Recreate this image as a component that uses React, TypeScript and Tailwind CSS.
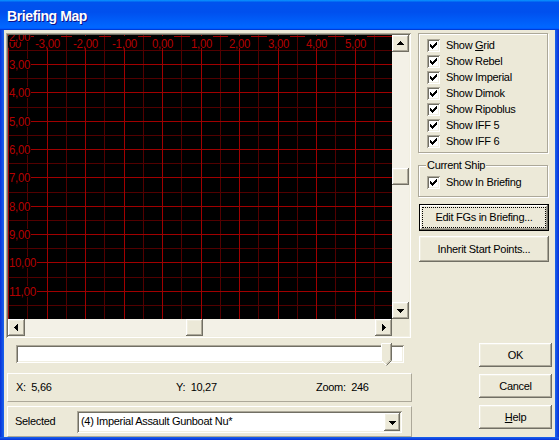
import React from 'react'

// classic 3D bevels (XP colour scheme)
const raised =
  'shadow-[inset_-1px_-1px_#716f64,inset_1px_1px_#ffffff,inset_-2px_-2px_#aca899,inset_2px_2px_#f1efe2]'
const sunken =
  'shadow-[inset_1px_1px_#aca899,inset_-1px_-1px_#ffffff,inset_2px_2px_#716f64,inset_-2px_-2px_#f1efe2]'

const MINOR = '#520000'
const MAJOR = '#a00000'
const LABEL = '#b40000'

function Btn3D({ className = '', children }: { className?: string; children?: React.ReactNode }) {
  return (
    <div className={`bg-[#ece9d8] ${raised} flex items-center justify-center shrink-0 ${className}`}>
      {children}
    </div>
  )
}

function Arrow({ dir, w = 17, h = 17 }: { dir: 'up' | 'down' | 'left' | 'right'; w?: number; h?: number }) {
  const cx = Math.floor(w / 2)
  const cy = Math.floor(h / 2)
  const rects: number[][] = []
  for (let k = 0; k < 4; k++) {
    if (dir === 'up') rects.push([cx - k, cy - 2 + k, 2 * k + 1, 1])
    if (dir === 'down') rects.push([cx - 3 + k, cy - 1 + k, 7 - 2 * k, 1])
    if (dir === 'left') rects.push([cx - 2 + k, cy - k, 1, 2 * k + 1])
    if (dir === 'right') rects.push([cx - 1 + k, cy - 3 + k, 1, 7 - 2 * k])
  }
  return (
    <svg width={w} height={h} className="block" shapeRendering="crispEdges">
      {rects.map(([x, y, rw, rh], i) => (
        <rect key={i} x={x} y={y} width={rw} height={rh} fill="#000" />
      ))}
    </svg>
  )
}

function Check({ children }: { children: React.ReactNode }) {
  const cols = [
    [3, 5],
    [4, 6],
    [5, 7],
    [6, 6],
    [7, 5],
    [8, 4],
    [9, 3],
  ]
  return (
    <div className="flex items-center h-[16px] gap-[6px]">
      <div className={`w-[13px] h-[13px] bg-white shrink-0 ${sunken}`}>
        <svg width="13" height="13" className="block" shapeRendering="crispEdges">
          {cols.map(([x, y]) => (
            <rect key={x} x={x} y={y} width={1} height={3} fill="#000" />
          ))}
        </svg>
      </div>
      <span>{children}</span>
    </div>
  )
}

function labelWidth(s: string) {
  let w = 0
  for (const c of s) w += c === '-' ? 4 : c === ',' ? 3 : 6
  return w
}

function fmt(v: number) {
  return v.toFixed(2).replace('.', ',')
}

function Grid() {
  const W = 384
  const H = 284
  const xs = Array.from({ length: 21 }, (_, j) => ({ x: Math.round(19.25 * j), major: j % 2 === 0, j })).filter(
    (l) => l.x < W
  )
  const ys = Array.from({ length: 21 }, (_, i) => ({ y: Math.round(0.67 + 14.167 * i), major: i % 2 === 0, i })).filter(
    (l) => l.y < H
  )
  const font = { fontFamily: "'Liberation Sans', Arial, sans-serif", fontSize: 12 }

  return (
    <svg width={W} height={H} className="block bg-black" shapeRendering="crispEdges">
      {xs.filter((l) => !l.major).map((l) => (
        <line key={'vm' + l.j} x1={l.x + 0.5} y1={0} x2={l.x + 0.5} y2={H} stroke={MINOR} />
      ))}
      {ys.filter((l) => !l.major).map((l) => (
        <line key={'hm' + l.i} x1={0} y1={l.y + 0.5} x2={W} y2={l.y + 0.5} stroke={MINOR} />
      ))}
      {xs.filter((l) => l.major).map((l) => (
        <line key={'vM' + l.j} x1={l.x + 0.5} y1={0} x2={l.x + 0.5} y2={H} stroke={MAJOR} />
      ))}
      {ys.filter((l) => l.major).map((l) => (
        <line key={'hM' + l.i} x1={0} y1={l.y + 0.5} x2={W} y2={l.y + 0.5} stroke={MAJOR} />
      ))}

      {/* column labels */}
      {xs.filter((l) => l.major).map((l) => {
        const s = fmt(-4 + l.j / 2)
        const w = labelWidth(s)
        const x0 = l.x + 0.5 - w / 2
        return (
          <g key={'cl' + l.j}>
            <rect x={x0 - 1} y={1} width={w + 2} height={12} fill="#000" />
            <text x={x0} y={12.5} textLength={w} lengthAdjust="spacingAndGlyphs" fill={LABEL} style={font}>
              {s}
            </text>
          </g>
        )
      })}

      {/* row labels */}
      {ys.filter((l) => l.major).map((l) => {
        const s = fmt(2 + l.i / 2)
        const w = labelWidth(s)
        return (
          <g key={'rl' + l.i}>
            <rect x={1} y={l.y - 5} width={w + 1} height={11} fill="#000" />
            <text x={1} y={l.y + 5} textLength={w} lengthAdjust="spacingAndGlyphs" fill={LABEL} style={font}>
              {s}
            </text>
          </g>
        )
      })}
    </svg>
  )
}

function SliderThumb() {
  return (
    <svg width="11" height="23" viewBox="0 0 11 23" className="absolute left-[365px] -top-[2px] block">
      <polygon points="0,0 11,0 11,17 5.5,22.5 0,17" fill="#ece9d8" />
      <path d="M0.5 17.5 V0.5 H10" stroke="#fff" fill="none" />
      <path d="M0.5 17.5 L5.5 22.5" stroke="#fff" fill="none" />
      <path d="M10.5 0 V17.5 L5.5 22.5" stroke="#716f64" fill="none" />
      <path d="M9.5 1 V17 L5.5 21" stroke="#aca899" fill="none" />
    </svg>
  )
}

export default function App() {
  return (
    <div className="w-[559px] h-[440px] flex flex-col overflow-hidden select-none font-['Liberation_Sans',Arial,sans-serif] text-[11px] leading-[13px] tracking-[-0.3px] text-black">
      {/* title bar */}
      <div className="h-[30px] shrink-0 flex items-center pl-[7px] pt-[2px] bg-[linear-gradient(180deg,#0997ff,#0053ee_8%,#0050ee_40%,#0066ff_88%,#0066ff_93%,#005bff_95%,#003dd7_96%,#003dd7)]">
        <span className="text-white font-bold text-[14px] leading-[16px] tracking-[-0.4px] [text-shadow:1px_1px_#0f1089]">
          Briefing Map
        </span>
      </div>

      <div className="flex h-[407px] shrink-0">
        <div className="w-[4px] bg-[linear-gradient(to_right,#0831d9,#1a64ec)]" />

        <div className="w-[551px] bg-[#ece9d8] flex">
          {/* left column */}
          <div className="ml-[2px] mt-[3px] w-[405px] flex flex-col">
            {/* map */}
            <div className={`h-[305px] p-[2px] ${sunken} flex flex-col`}>
              <div className="flex h-[284px]">
                <Grid />
                <div className="w-[17px] h-[284px] flex flex-col bg-[#f3f1e7]">
                  <Btn3D className="w-[17px] h-[17px]">
                    <Arrow dir="up" />
                  </Btn3D>
                  <div className="h-[116px] shrink-0" />
                  <Btn3D className="w-[17px] h-[17px]" />
                  <div className="flex-1" />
                  <Btn3D className="w-[17px] h-[17px]">
                    <Arrow dir="down" />
                  </Btn3D>
                </div>
              </div>
              <div className="flex h-[17px]">
                <div className="w-[384px] h-[17px] flex bg-[#f3f1e7]">
                  <Btn3D className="w-[17px] h-[17px]">
                    <Arrow dir="left" />
                  </Btn3D>
                  <div className="w-[161px] shrink-0" />
                  <Btn3D className="w-[17px] h-[17px]" />
                  <div className="flex-1" />
                  <Btn3D className="w-[17px] h-[17px]">
                    <Arrow dir="right" />
                  </Btn3D>
                </div>
                <div className="w-[17px] h-[17px] bg-[#ece9d8]" />
              </div>
            </div>

            {/* slider */}
            <div className="h-[35px] pt-[7px] pl-[10px] shrink-0">
              <div className={`relative w-[388px] h-[18px] bg-white ${sunken}`}>
                <SliderThumb />
              </div>
            </div>

            {/* status */}
            <div className="ml-[1px] w-[405px] h-[29px] shrink-0 flex items-center pl-[8px] border border-t-white border-l-white border-r-[#aca899] border-b-[#aca899] whitespace-pre">
              <span className="w-[160px] shrink-0">X:  5,66</span>
              <span className="w-[140px] shrink-0">Y:  10,27</span>
              <span>Zoom:  246</span>
            </div>

            {/* selected */}
            <div className="mt-[4px] ml-[1px] w-[405px] h-[31px] shrink-0 flex items-center border border-t-white border-l-white border-r-[#aca899] border-b-[#aca899]">
              <span className="w-[69px] pl-[7px] shrink-0">Selected</span>
              <div className={`w-[325px] h-[22px] bg-white ${sunken} p-[2px] flex items-center`}>
                <span className="flex-1 pl-[2px] truncate">(4) Imperial Assault Gunboat Nu*</span>
                <Btn3D className="w-[16px] h-[18px]">
                  <Arrow dir="down" w={16} h={18} />
                </Btn3D>
              </div>
            </div>
          </div>

          {/* right column */}
          <div className="ml-[7px] mt-[3px] w-[134px] flex flex-col">
            <div className="w-[130px] h-[120px] shrink-0 border border-[#aca899] shadow-[inset_1px_1px_#fff,1px_1px_#fff] pt-[3px] pl-[8px]">
              <Check>
                Show <u>G</u>rid
              </Check>
              <Check>Show Rebel</Check>
              <Check>Show Imperial</Check>
              <Check>Show Dimok</Check>
              <Check>Show Ripoblus</Check>
              <Check>Show IFF 5</Check>
              <Check>Show IFF 6</Check>
            </div>

            <div className="mt-[12px] w-[130px] h-[32px] shrink-0 border border-[#aca899] shadow-[inset_1px_1px_#fff,1px_1px_#fff] pl-[7px]">
              <div className="-mt-[7px] w-fit bg-[#ece9d8] px-[1px]">Current Ship</div>
              <div className="mt-[2px] pl-[1px]">
                <Check>Show In Briefing</Check>
              </div>
            </div>

            <div className="mt-[7px] ml-[1px] w-[130px] h-[27px] shrink-0 border border-black flex">
              <div className={`flex-1 bg-[#ece9d8] ${raised} p-[2px] flex`}>
                <div className="flex-1 border border-dotted border-black flex items-center justify-center">
                  Edit FGs in Briefing...
                </div>
              </div>
            </div>

            <Btn3D className="mt-[5px] ml-[1px] w-[130px] h-[26px]">Inherit Start Points...</Btn3D>

            <Btn3D className="mt-[81px] ml-[61px] w-[73px] h-[24px]">OK</Btn3D>
            <Btn3D className="mt-[7px] ml-[61px] w-[73px] h-[24px]">Cancel</Btn3D>
            <Btn3D className="mt-[7px] ml-[61px] w-[73px] h-[24px]">
              <span>
                <u>H</u>elp
              </span>
            </Btn3D>
          </div>
        </div>

        <div className="w-[4px] bg-[linear-gradient(to_left,#0831d9,#1a64ec)]" />
      </div>

      <div className="h-[3px] shrink-0 bg-[linear-gradient(to_top,#0831d9,#1a64ec)]" />
    </div>
  )
}
